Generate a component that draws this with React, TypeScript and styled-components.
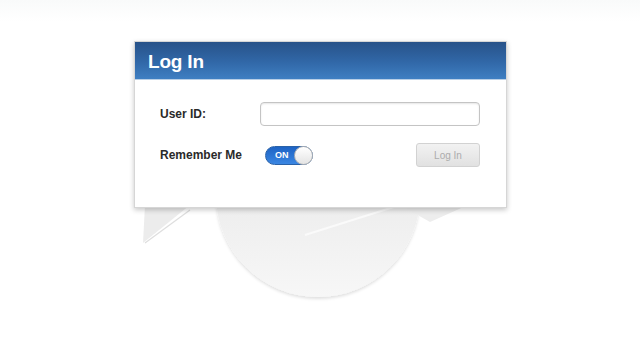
import React from 'react'
import styled, { createGlobalStyle } from 'styled-components'

const GlobalStyle = createGlobalStyle`
  html, body {
    margin: 0;
    padding: 0;
    background: #fdfdfd;
    font-family: 'Liberation Sans', Arial, sans-serif;
  }
`

const Stage = styled.div`
  position: relative;
  width: 640px;
  height: 360px;
  overflow: hidden;
  background: linear-gradient(#f9fafa 0%, #ffffff 6%, #ffffff 100%);
  padding: 41px 0 0 134px;
  box-sizing: border-box;
`

const Backdrop = styled.svg`
  position: absolute;
  left: 0;
  top: 0;
  z-index: 0;
`

const Panel = styled.div`
  position: relative;
  z-index: 1;
  width: 371px;
  background: #ffffff;
  border: 1px solid #d6d6d6;
  box-shadow: 0 2px 5px rgba(0, 0, 0, 0.22);
`

const Header = styled.div`
  height: 38px;
  display: flex;
  align-items: center;
  padding: 2px 0 0 13px;
  box-sizing: border-box;
  background: linear-gradient(#275289 0%, #3168a8 55%, #3f7fc2 100%);
  border-bottom: 1px solid #b9cfe6;
`

const Title = styled.h1`
  margin: 0;
  font-size: 19px;
  font-weight: bold;
  color: #ffffff;
  letter-spacing: -0.2px;
`

const Body = styled.div`
  display: flex;
  flex-direction: column;
  gap: 17px;
  padding: 22px 26px 40px 25px;
`

const Row = styled.div`
  display: flex;
  align-items: center;
`

const Label = styled.label`
  width: 100px;
  font-size: 12px;
  font-weight: bold;
  color: #2a2a2a;
`

const Input = styled.input`
  width: 220px;
  height: 24px;
  box-sizing: border-box;
  border: 1px solid #c4c4c4;
  border-radius: 4px;
  box-shadow: inset 0 1px 2px rgba(0, 0, 0, 0.1);
  background: #fff;
`

const Toggle = styled.div`
  margin-left: 5px;
  width: 48px;
  height: 19px;
  border-radius: 10px;
  background: linear-gradient(#1d63c4, #3a86e2);
  border: 1px solid #2a62a8;
  box-sizing: border-box;
  display: flex;
  align-items: center;
  justify-content: space-between;
  padding-left: 9px;
`

const ToggleText = styled.span`
  font-size: 9px;
  font-weight: bold;
  color: #ffffff;
`

const Knob = styled.span`
  width: 19px;
  height: 19px;
  margin-right: -1px;
  border-radius: 50%;
  background: linear-gradient(#ffffff, #e4e4e4);
  border: 1px solid #b5b5b5;
  box-sizing: border-box;
`

const LoginButton = styled.button`
  margin-left: auto;
  width: 64px;
  height: 24px;
  border: 1px solid #d2d2d2;
  border-radius: 3px;
  background: linear-gradient(#f2f2f2, #e1e1e1);
  color: #acacac;
  font-family: 'Liberation Sans', Arial, sans-serif;
  font-size: 10px;
`

export default function App() {
  return (
    <>
      <GlobalStyle />
      <Stage>
        <Backdrop width="640" height="360" viewBox="0 0 640 360">
          <defs>
            <linearGradient id="disc" x1="0" y1="0" x2="0" y2="1">
              <stop offset="0" stopColor="#e2e2e2" />
              <stop offset="1" stopColor="#f7f7f7" />
            </linearGradient>
            <filter id="soft" x="-10%" y="-10%" width="120%" height="130%">
              <feDropShadow dx="0" dy="2" stdDeviation="1.5" floodColor="#000" floodOpacity="0.12" />
            </filter>
          </defs>
          <path d="M145 205 L190 205 L143 243 Z" fill="#ececec" />
          <path d="M145 243 L190 210" stroke="#dedede" strokeWidth="1.2" />
          <circle cx="318" cy="195" r="102" fill="url(#disc)" filter="url(#soft)" />
          <path d="M400 205 L468 205 L430 222 Z" fill="#ededed" />
          <path d="M305 235 L400 205" stroke="#fafafa" strokeWidth="2" />
        </Backdrop>
        <Panel>
          <Header>
            <Title>Log In</Title>
          </Header>
          <Body>
            <Row>
              <Label>User ID:</Label>
              <Input type="text" />
            </Row>
            <Row>
              <Label>Remember Me</Label>
              <Toggle>
                <ToggleText>ON</ToggleText>
                <Knob />
              </Toggle>
              <LoginButton disabled>Log In</LoginButton>
            </Row>
          </Body>
        </Panel>
      </Stage>
    </>
  )
}
